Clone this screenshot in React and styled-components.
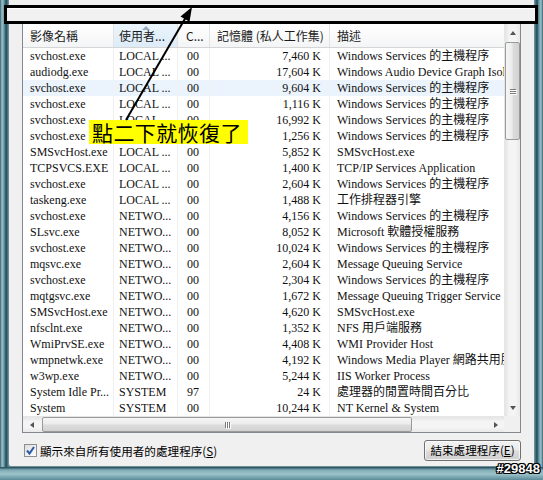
import React from 'react'
import styled, { createGlobalStyle } from 'styled-components'

const GlobalStyle = createGlobalStyle`
  html, body {
    margin: 0;
    padding: 0;
    background: #ffffff;
  }
`

const uiFont = `"Noto Sans CJK TC", "Liberation Sans", sans-serif`
const listFont = `"Liberation Serif", "Noto Sans CJK TC", serif`

const COLS = '91px 64px 32px 120px 260px'

const Window = styled.div`
  position: relative;
  width: 543px;
  height: 480px;
  box-sizing: border-box;
  padding: 0 8px 13px 8px;
  overflow: hidden;
  background:
    linear-gradient(to bottom, transparent 467px, #1f4654 467px, #7fabb6 470px, #9cc3cb 474px, #5b8b98 480px),
    linear-gradient(to right, #35606d 0px, #9dc2ca 2px, #6b9aa6 4px, #1f4a57 6px, #4f7e8b 8px,
      #4f7e8b 535px, #1f4a57 537px, #6b9aa6 539px, #9dc2ca 541px, #35606d 543px);
`

const Panel = styled.div`
  height: 100%;
  box-sizing: border-box;
  background: #f0f0f0;
  border: 1px solid #6f8c97;
  border-top: none;
  border-radius: 0 0 3px 3px;
  padding: 23px 13px 0 13px;
  display: flex;
  flex-direction: column;
`

const ListView = styled.div`
  width: 499px;
  height: 410px;
  box-sizing: border-box;
  border: 1px solid #828790;
  background: #ffffff;
  display: grid;
  grid-template-columns: 1fr 16px;
  grid-template-rows: 1fr 16px;
`

const ListBody = styled.div`
  overflow: hidden;
  min-width: 0;
`

const HeaderRow = styled.div`
  display: grid;
  grid-template-columns: ${COLS};
  height: 24px;
  box-sizing: border-box;
  border-bottom: 1px solid #d5d5d5;
  background: linear-gradient(#ffffff, #fafafa 50%, #f3f4f5);
`

const HeaderCell = styled.div`
  position: relative;
  font-family: ${uiFont};
  font-size: 12px;
  line-height: 23px;
  color: #1b1b1b;
  padding-left: ${p => p.$pad}px;
  border-right: 1px solid #e2e3e4;
  white-space: nowrap;
  overflow: hidden;
  background: ${p => (p.$sorted ? 'linear-gradient(#eaf4fb, #dcecf8)' : 'transparent')};
`

const SortArrow = styled.span`
  position: absolute;
  top: 2px;
  left: 50%;
  margin-left: -4px;
  width: 0;
  height: 0;
  border-left: 4px solid transparent;
  border-right: 4px solid transparent;
  border-bottom: 4px solid #9aaabd;
`

const Row = styled.div`
  display: grid;
  grid-template-columns: ${COLS};
  height: 16px;
  background: ${p => (p.$hover ? '#ebf4fc' : 'transparent')};
`

const Cell = styled.div`
  font-family: ${listFont};
  font-size: 12px;
  line-height: 16px;
  color: #111;
  white-space: nowrap;
  overflow: hidden;
  text-align: ${p => (p.$right ? 'right' : 'left')};
  padding-left: ${p => (p.$right ? 0 : p.$pad)}px;
  padding-right: ${p => (p.$right ? 8 : 0)}px;
  border-right: 1px solid #f1f1f1;
`

const VScroll = styled.div`
  display: flex;
  flex-direction: column;
  align-items: center;
  background: linear-gradient(to right, #e4e4e4, #f4f4f4 30%, #f4f4f4 70%, #e9e9e9);
  border-left: 1px solid #e6e6e6;
`

const HScroll = styled.div`
  display: flex;
  align-items: center;
  background: linear-gradient(#e4e4e4, #f4f4f4 30%, #f4f4f4 70%, #e9e9e9);
  border-top: 1px solid #e6e6e6;
`

const Corner = styled.div`
  background: #f0f0f0;
`

const ArrowBox = styled.div`
  width: ${p => (p.$horizontal ? '17px' : '15px')};
  height: ${p => (p.$horizontal ? '15px' : '17px')};
  display: flex;
  align-items: center;
  justify-content: center;
  flex: none;
`

const Tri = styled.span`
  width: 0;
  height: 0;
  border: 3.5px solid transparent;
  ${p => p.$dir === 'up' && 'border-bottom: 4px solid #555; border-top-width: 0;'}
  ${p => p.$dir === 'down' && 'border-top: 4px solid #555; border-bottom-width: 0;'}
  ${p => p.$dir === 'left' && 'border-right: 4px solid #555; border-left-width: 0; border-width: 3.5px 4px 3.5px 0;'}
  ${p => p.$dir === 'right' && 'border-left: 4px solid #555; border-right-width: 0; border-width: 3.5px 0 3.5px 4px;'}
`

const Thumb = styled.div`
  flex: none;
  box-sizing: border-box;
  border: 1px solid #9a9a9a;
  border-radius: 2px;
  display: flex;
  align-items: center;
  justify-content: center;
  ${p =>
    p.$horizontal
      ? `width: 370px; height: 15px; margin-left: 2px;
         background: linear-gradient(#f6f6f6, #ececec 45%, #dcdcdc 55%, #d2d2d2);`
      : `width: 15px; height: 98px; margin-top: 1px;
         background: linear-gradient(to right, #f6f6f6, #ececec 45%, #dcdcdc 55%, #d2d2d2);`}
`

const Grip = styled.div`
  display: flex;
  flex-direction: ${p => (p.$horizontal ? 'row' : 'column')};
  gap: 1px;
  span {
    display: block;
    background: #7c7c7c;
    box-shadow: 1px 1px 0 #ffffff;
    width: ${p => (p.$horizontal ? '1px' : '6px')};
    height: ${p => (p.$horizontal ? '6px' : '1px')};
  }
`

const Spacer = styled.div`
  flex: 1;
`

const Footer = styled.div`
  display: flex;
  align-items: center;
  justify-content: space-between;
  width: 499px;
  height: 21px;
  margin-top: 7px;
  padding-left: 2px;
  box-sizing: border-box;
`

const CheckLabel = styled.label`
  display: flex;
  align-items: center;
  gap: 3px;
  font-family: ${uiFont};
  font-size: 11.6px;
  color: #000;
  u { text-decoration: underline; }
`

const CheckBox = styled.span`
  width: 13px;
  height: 13px;
  box-sizing: border-box;
  border: 1px solid #8e8f8f;
  background: linear-gradient(135deg, #dcdcdc, #ffffff);
  display: flex;
  align-items: center;
  justify-content: center;
`

const Button = styled.button`
  width: 97px;
  height: 21px;
  padding: 0;
  box-sizing: border-box;
  border: 1px solid #707070;
  border-radius: 3px;
  background: linear-gradient(#f2f2f2 0%, #ebebeb 48%, #dddddd 52%, #cfcfcf 100%);
  box-shadow: inset 0 0 0 1px rgba(255, 255, 255, 0.7);
  font-family: ${uiFont};
  font-size: 11.6px;
  color: #000;
  line-height: 19px;
`

const Annotation = styled.div`
  position: absolute;
  left: 4px;
  top: 5px;
  width: 534px;
  height: 19px;
  box-sizing: border-box;
  border: 3px solid #000;
  background: #f1f1f1;
  box-shadow: inset 0 1px 0 #ffffff;
`

const Callout = styled.div`
  position: absolute;
  left: 89px;
  top: 120px;
  width: 159px;
  height: 24px;
  background: #ffff00;
  font-family: ${uiFont};
  font-size: 21px;
  font-weight: 400;
  line-height: 24px;
  letter-spacing: 0.4px;
  color: #000;
  padding-left: 3px;
  box-sizing: border-box;
  white-space: nowrap;
`

const ArrowLayer = styled.svg`
  position: absolute;
  left: 0;
  top: 0;
  pointer-events: none;
`

const Watermark = styled.div`
  position: absolute;
  right: 3px;
  bottom: 4px;
  font-family: "Liberation Sans", sans-serif;
  font-weight: bold;
  font-size: 13px;
  color: #ffffff;
  text-shadow: 1px 0 0 #000, -1px 0 0 #000, 0 1px 0 #000, 0 -1px 0 #000,
    1px 1px 0 #000, -1px -1px 0 #000, 1px -1px 0 #000, -1px 1px 0 #000;
`

const SVC = 'Windows Services 的主機程序'

const processes = [
  ['svchost.exe', 'LOCAL ...', '00', '7,460 K', SVC],
  ['audiodg.exe', 'LOCAL ...', '00', '17,604 K', 'Windows Audio Device Graph Isolation'],
  ['svchost.exe', 'LOCAL ...', '00', '9,604 K', SVC],
  ['svchost.exe', 'LOCAL ...', '00', '1,116 K', SVC],
  ['svchost.exe', 'LOCAL ...', '00', '16,992 K', SVC],
  ['svchost.exe', 'LOCAL ...', '00', '1,256 K', SVC],
  ['SMSvcHost.exe', 'LOCAL ...', '00', '5,852 K', 'SMSvcHost.exe'],
  ['TCPSVCS.EXE', 'LOCAL ...', '00', '1,400 K', 'TCP/IP Services Application'],
  ['svchost.exe', 'LOCAL ...', '00', '2,604 K', SVC],
  ['taskeng.exe', 'LOCAL ...', '00', '1,488 K', '工作排程器引擎'],
  ['svchost.exe', 'NETWO...', '00', '4,156 K', SVC],
  ['SLsvc.exe', 'NETWO...', '00', '8,052 K', 'Microsoft 軟體授權服務'],
  ['svchost.exe', 'NETWO...', '00', '10,024 K', SVC],
  ['mqsvc.exe', 'NETWO...', '00', '2,604 K', 'Message Queuing Service'],
  ['svchost.exe', 'NETWO...', '00', '2,304 K', SVC],
  ['mqtgsvc.exe', 'NETWO...', '00', '1,672 K', 'Message Queuing Trigger Service'],
  ['SMSvcHost.exe', 'NETWO...', '00', '4,620 K', 'SMSvcHost.exe'],
  ['nfsclnt.exe', 'NETWO...', '00', '1,352 K', 'NFS 用戶端服務'],
  ['WmiPrvSE.exe', 'NETWO...', '00', '4,408 K', 'WMI Provider Host'],
  ['wmpnetwk.exe', 'NETWO...', '00', '4,192 K', 'Windows Media Player 網路共用服務'],
  ['w3wp.exe', 'NETWO...', '00', '5,244 K', 'IIS Worker Process'],
  ['System Idle Pr...', 'SYSTEM', '97', '24 K', '處理器的閒置時間百分比'],
  ['System', 'SYSTEM', '00', '10,244 K', 'NT Kernel & System'],
]

const headers = [
  { label: '影像名稱', pad: 7 },
  { label: '使用者...', pad: 5, sorted: true },
  { label: 'C...', pad: 8 },
  { label: '記憶體 (私人工作集)', pad: 7 },
  { label: '描述', pad: 7 },
]

const cellPads = [7, 5, 9, 0, 7]

const GripLines = ({ horizontal }) => (
  <Grip $horizontal={horizontal}>
    <span />
    <span />
    <span />
  </Grip>
)

const App = () => (
  <>
    <GlobalStyle />
    <Window>
      <Panel>
        <ListView>
          <ListBody>
            <HeaderRow>
              {headers.map(h => (
                <HeaderCell key={h.label} $pad={h.pad} $sorted={h.sorted}>
                  {h.sorted && <SortArrow />}
                  {h.label}
                </HeaderCell>
              ))}
            </HeaderRow>
            {processes.map((p, i) => (
              <Row key={i} $hover={i === 2}>
                {p.map((v, j) => (
                  <Cell key={j} $pad={cellPads[j]} $right={j === 3}>{v}</Cell>
                ))}
              </Row>
            ))}
          </ListBody>
          <VScroll>
            <ArrowBox><Tri $dir="up" /></ArrowBox>
            <Thumb><GripLines /></Thumb>
            <Spacer />
            <ArrowBox><Tri $dir="down" /></ArrowBox>
          </VScroll>
          <HScroll>
            <ArrowBox $horizontal><Tri $dir="left" /></ArrowBox>
            <Thumb $horizontal><GripLines horizontal /></Thumb>
            <Spacer />
            <ArrowBox $horizontal><Tri $dir="right" /></ArrowBox>
          </HScroll>
          <Corner />
        </ListView>
        <Footer>
          <CheckLabel>
            <CheckBox>
              <svg width="11" height="11" viewBox="0 0 11 11">
                <path d="M2 5.5 L4.5 8.5 L9 2" fill="none" stroke="#2b5aa8" strokeWidth="2" />
              </svg>
            </CheckBox>
            <span>顯示來自所有使用者的處理程序(<u>S</u>)</span>
          </CheckLabel>
          <Button>結束處理程序(<u>E</u>)</Button>
        </Footer>
      </Panel>
      <Annotation />
      <Callout>點二下就恢復了</Callout>
      <ArrowLayer width="543" height="480" viewBox="0 0 543 480">
        <line x1="126" y1="120" x2="186" y2="17" stroke="#000" strokeWidth="2" />
        <polygon points="192,7 189.5,21.8 180.5,16.4" fill="#000" />
      </ArrowLayer>
      <Watermark>#29848</Watermark>
    </Window>
  </>
)

export default App
